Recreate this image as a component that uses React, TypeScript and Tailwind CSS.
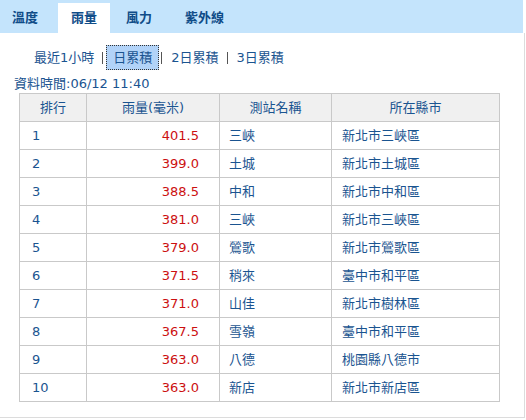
import React from "react";

const rows: [number, string, string, string][] = [
  [1, "401.5", "三峽", "新北市三峽區"],
  [2, "399.0", "土城", "新北市土城區"],
  [3, "388.5", "中和", "新北市中和區"],
  [4, "381.0", "三峽", "新北市三峽區"],
  [5, "379.0", "鶯歌", "新北市鶯歌區"],
  [6, "371.5", "稍來", "臺中市和平區"],
  [7, "371.0", "山佳", "新北市樹林區"],
  [8, "367.5", "雪嶺", "臺中市和平區"],
  [9, "363.0", "八德", "桃園縣八德市"],
  [10, "363.0", "新店", "新北市新店區"],
];

const font = { fontFamily: '"DejaVu Sans", "Noto Sans CJK TC", sans-serif' };

export default function App() {
  return (
    <div className="w-[526px] h-[420px] bg-white text-[13px] text-[#1a5490]" style={font}>
      <div className="w-[523px] h-[33px] bg-[#c4e4fc] flex items-end">
        <div className="h-[30px] flex items-center px-[13px] ml-[-1px] font-bold text-[#0f4c88] leading-[14px]">溫度</div>
        <div className="h-[30px] flex items-center px-[13px] ml-[7px] bg-white font-bold text-[#0f4c88] leading-[14px]">雨量</div>
        <div className="h-[30px] flex items-center px-[13px] ml-[3px] font-bold text-[#0f4c88] leading-[14px]">風力</div>
        <div className="h-[30px] flex items-center px-[13px] ml-[7px] font-bold text-[#0f4c88] leading-[14px]">紫外線</div>
      </div>
      <div className="w-[525px] h-[385px] border-r border-b border-[#dcdcdc] pt-[12px]">
        <div className="flex items-center h-[25px] pl-[28px] leading-[14px]">
          <span className="px-[6px]">最近1小時</span>
          <span className="w-px h-[12px] bg-[#555] ml-[2px] mr-[3px]" />
          <span className="h-[25px] flex items-center px-[6px] bg-[#b2d3f8] border border-dotted border-[#333]">日累積</span>
          <span className="w-px h-[12px] bg-[#555] ml-[2px] mr-[3px]" />
          <span className="px-[6px]">2日累積</span>
          <span className="w-px h-[12px] bg-[#555] ml-[2px] mr-[3px]" />
          <span className="px-[6px]">3日累積</span>
        </div>
        <div className="mt-[6px] h-[16px] leading-[16px] pl-[14px]">資料時間:06/12 11:40</div>
        <div className="mt-[1px] ml-[19px] w-[481px] border-l border-t border-[#c9c9c9]">
          <div className="grid grid-cols-[67px_133px_112px_168px] h-[28px] border-b border-[#c9c9c9] bg-[#f0f0f0] leading-[14px]">
            <div className="border-r border-[#c9c9c9] flex items-center justify-center">排行</div>
            <div className="border-r border-[#c9c9c9] flex items-center justify-center">雨量(毫米)</div>
            <div className="border-r border-[#c9c9c9] flex items-center justify-center">測站名稱</div>
            <div className="border-r border-[#c9c9c9] flex items-center justify-center">所在縣市</div>
          </div>
          {rows.map(([rank, val, st, city]) => (
            <div key={rank} className="grid grid-cols-[67px_133px_112px_168px] h-[28px] border-b border-[#c9c9c9] leading-[14px]">
              <div className="border-r border-[#c9c9c9] flex items-center pl-[12px]">{rank}</div>
              <div className="border-r border-[#c9c9c9] flex items-center justify-end pr-[20px] text-[#cc1010]">{val}</div>
              <div className="border-r border-[#c9c9c9] flex items-center pl-[9px]">{st}</div>
              <div className="border-r border-[#c9c9c9] flex items-center pl-[10px]">{city}</div>
            </div>
          ))}
        </div>
      </div>
    </div>
  );
}
